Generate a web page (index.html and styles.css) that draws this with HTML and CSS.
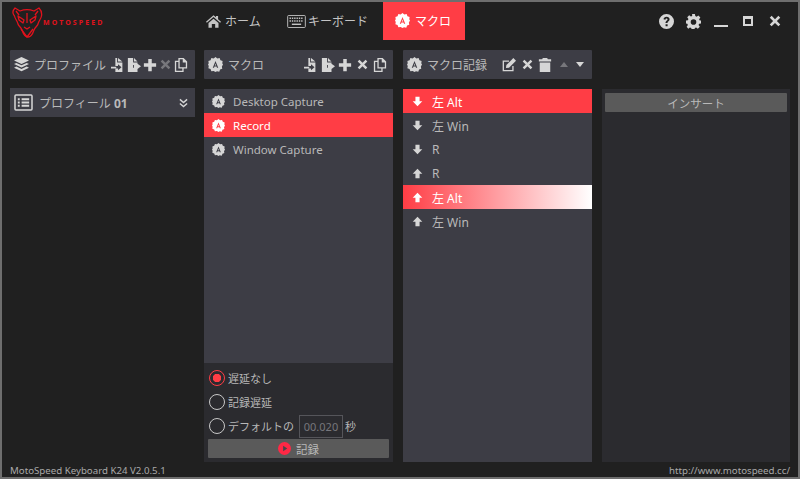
FILE: index.html
```html
<!DOCTYPE html>
<html lang="ja">
<head>
  <meta charset="UTF-8">
  <title>MotoSpeed Keyboard K24</title>
  <link rel="stylesheet" href="styles.css">
</head>
<body>
  <!-- Shared icons -->
  <svg class="defs" width="0" height="0">
    <symbol id="i-badge" viewBox="0 0 16 16">
      <path d="M8 0l2 1.500 2.400-.4.9 2.300 2.300.9-.4 2.400L16 8l-1.200 2 .4 2.400-2.300.9-.9 2.300-2.400-.4L8 16l-2-1.200-2.400.4-.9-2.300-2.300-.9.4-2.400L0 8l.8-1.300-.4-2.400 2.300-.9.9-2.300 2.400.4z"/>
      <path fill="var(--badge-in, #3d3d45)" fill-rule="evenodd" d="M8 4.200l2.900 7.300H9.600l-.5-1.400H6.900l-.5 1.400H5.100zM7.300 9h1.400L8 7z"/>
    </symbol>
    <symbol id="i-import" viewBox="0 0 16 16">
      <path d="M7 0v5h6v11H5v-4h3v2l4-3.500L8 7v2H5V0zM8 0l5 4H8z"/><path d="M0 10h6v2H0z"/>
    </symbol>
    <symbol id="i-export" viewBox="0 0 16 16">
      <path d="M1 0h6v5h5v3H7v3h5v5H1zM8 0l4 4H8zM12 6.500l4 3-4 3V11H8V8h4z"/>
    </symbol>
    <symbol id="i-plus" viewBox="0 0 16 16"><path d="M6 1h4v5h5v4h-5v5H6v-5H1V6h5z"/></symbol>
    <symbol id="i-times" viewBox="0 0 16 16"><path d="M3.500 1L8 5.500 12.500 1 15 3.500 10.500 8l4.500 4.500-2.500 2.500L8 10.500 3.500 15 1 12.500 5.500 8 1 3.500z"/></symbol>
    <symbol id="i-copy" viewBox="0 0 16 16">
      <path fill-rule="evenodd" d="M5 0h6l4 4v8h-4v4H1V3h4zM6.500 1.500V10.500h7V5H10V1.500zM2.500 4.500v10h7v-2.500H5V4.500z"/>
    </symbol>
    <symbol id="i-up" viewBox="0 0 16 16"><path d="M8 1l7 7.500h-4V15H5V8.500H1z"/></symbol>
    <symbol id="i-down" viewBox="0 0 16 16"><path d="M8 15L1 7.500h4V1h6v6.500h4z"/></symbol>
    <symbol id="i-cog" viewBox="0 0 16 16">
      <path fill-rule="evenodd" d="M6.500 0h3l.4 2.200 1.400.6L13.200 1.500l2.100 2.100L14 5.500l.6 1.400 1.400.1v3l-2 .4-.6 1.400 1.300 1.800-2.100 2.100-1.800-1.300-1.400.6-.4 1.900h-3l-.4-2-1.400-.6-1.800 1.300L.7 13.600 2 11.800l-.6-1.400L0 10V7l2-.4.600-1.400L1.300 3.400 3.400 1.300 5.200 2.600l1.400-.6zM8 5.500a3 3 0 100 6 3 3 0 000-6z"/>
    </symbol>
  </svg>

  <div class="window">
    <!-- Title bar -->
    <header class="topbar">
      <div class="logo">
        <svg class="logo-head line" viewBox="0 0 32 32" stroke="#e0121c" stroke-width="1.300" stroke-linejoin="round">
          <path d="M4 1l5 3c4-1.500 10-1.500 14 0l5-3c2 2 3 5 2.500 8-.5 3-3 5-3.500 8-.5 2-3 3-4 6-1 3-3 7-6 7s-5-4-6-7c-1-3-3.500-4-4-6-.5-3-3-5-3.500-8C1 6 2 3 4 1z"/>
          <path d="M7 9l6 4-1 3-4-3zM25 9l-6 4 1 3 4-3zM16 6v10M13 20l3 2 3-2M10 22l6 8 6-8M5 4l3 4M27 4l-3 4"/>
        </svg>
        <span class="logo-text">MOTOSPEED</span>
      </div>
      <nav class="tabs">
        <div class="tab tab-home">
          <svg class="tab-icon" viewBox="0 0 18 16"><path d="M9 1l3 2.600V2h2.500v3.800L18 9l-1 1.100L9 3.200 1 10.100 0 9zM3 10.500L9 5.200l6 5.300V16h-4v-4.500H7V16H3z"/></svg>
          ホーム
        </div>
        <div class="tab tab-keys">
          <svg class="tab-icon key-icon line" viewBox="0 0 20 14" stroke="currentColor"><rect x=".5" y=".5" width="19" height="13" rx="1"/><path stroke-dasharray="1.500 1" stroke-width="1.500" d="M2.500 3.500h15M2.500 6.500h15"/><path stroke-width="1.500" d="M5 10h10"/></svg>
          キーボード
        </div>
        <div class="tab tab-active">
          <svg class="tab-icon badge-white"><use href="#i-badge"/></svg>
          マクロ
        </div>
      </nav>
      <div class="winctl">
        <svg class="ctl" viewBox="0 0 16 16"><path fill-rule="evenodd" d="M8 0a8 8 0 110 16A8 8 0 018 0zM7 11v2h2.200v-2zM8.100 3C6.300 3 5 4 4.800 5.700l2 .3c.1-.8.600-1.200 1.200-1.200.6 0 1.100.4 1.100 1 0 1.200-2.200 1.500-2.200 3.500v.4h2.100c0-1.500 2.300-1.800 2.300-4C11.300 4 9.900 3 8.100 3z"/></svg>
        <svg class="ctl"><use href="#i-cog"/></svg>
        <span class="ctl-min"></span>
        <span class="ctl-max"></span>
        <svg class="ctl ctl-close"><use href="#i-times"/></svg>
      </div>
    </header>

    <!-- Four columns -->
    <main class="panels">
      <section class="col col-profile">
        <div class="head">
          <svg class="head-icon" viewBox="0 0 16 16"><path d="M8 0l8 3.700-8 3.700L0 3.700zM2.500 6.300L8 8.800l5.500-2.500L16 7.500l-8 3.800-8-3.800zM2.500 10.200L8 12.700l5.500-2.500L16 11.500 8 15.300 0 11.500z"/></svg>
          <span class="head-title">プロファイル</span>
          <div class="tools tools-profile">
            <svg class="tool"><use href="#i-import"/></svg>
            <svg class="tool"><use href="#i-export"/></svg>
            <svg class="tool"><use href="#i-plus"/></svg>
            <svg class="tool tool-x tool-off"><use href="#i-times"/></svg>
            <svg class="tool"><use href="#i-copy"/></svg>
          </div>
        </div>
        <div class="profile">
          <svg class="profile-icon line" viewBox="0 0 20 18" stroke="currentColor"><rect x="1" y="1" width="18" height="16" rx="1" stroke-width="1.600"/><path stroke-width="2" d="M4 5.500h2M8 5.500h8M4 9h2M8 9h8M4 12.500h2M8 12.500h8"/></svg>
          <span>プロフィール <b>01</b></span>
          <svg class="chev line" viewBox="0 0 10 10" stroke="currentColor" stroke-width="1.600"><path d="M1 1l4 3.500L9 1M1 5.500L5 9l4-3.500"/></svg>
        </div>
      </section>

      <section class="col">
        <div class="head">
          <svg class="head-icon"><use href="#i-badge"/></svg>
          <span class="head-title">マクロ</span>
          <div class="tools">
            <svg class="tool"><use href="#i-import"/></svg>
            <svg class="tool"><use href="#i-export"/></svg>
            <svg class="tool"><use href="#i-plus"/></svg>
            <svg class="tool tool-x"><use href="#i-times"/></svg>
            <svg class="tool"><use href="#i-copy"/></svg>
          </div>
        </div>
        <div class="macro-box">
          <ul class="list list-macro">
            <li><svg class="row-icon"><use href="#i-badge"/></svg>Desktop Capture</li>
            <li class="on"><svg class="row-icon"><use href="#i-badge"/></svg>Record</li>
            <li><svg class="row-icon"><use href="#i-badge"/></svg>Window Capture</li>
          </ul>
          <div class="options">
            <label class="opt"><span class="radio radio-on"></span>遅延なし</label>
            <label class="opt"><span class="radio"></span>記録遅延</label>
            <label class="opt"><span class="radio"></span>デフォルトの<span class="delay">00.020</span>秒</label>
            <button class="btn btn-record">
              <svg class="rec-dot" viewBox="0 0 14 14"><circle cx="7" cy="7" r="7" fill="#ff2845"/><path fill="#4a4248" d="M5.500 4l4.500 3-4.500 3z"/></svg>
              記録
            </button>
          </div>
        </div>
      </section>

      <section class="col">
        <div class="head">
          <svg class="head-icon"><use href="#i-badge"/></svg>
          <span class="head-title">マクロ記録</span>
          <div class="tools tools-record">
            <svg class="tool line" viewBox="0 0 16 16" stroke="currentColor" stroke-width="1.500"><path d="M12.500 9v5.500H1.500V3.500H8"/><path class="solid" stroke="none" d="M13 0l3 3-8 8-3.500.5L5 8z"/></svg>
            <svg class="tool tool-x"><use href="#i-times"/></svg>
            <svg class="tool" viewBox="0 0 16 16"><path d="M5.500 0h5l.7 1.500H15V4H1V1.500h3.800zM2 5h12v11H2z"/></svg>
            <svg class="caret caret-off" viewBox="0 0 10 6"><path d="M5 0l5 6H0z"/></svg>
            <svg class="caret" viewBox="0 0 10 6"><path d="M5 6L0 0h10z"/></svg>
          </div>
        </div>
        <ul class="list list-keys">
          <li class="on"><svg class="row-icon"><use href="#i-down"/></svg>左 Alt</li>
          <li><svg class="row-icon"><use href="#i-down"/></svg>左 Win</li>
          <li><svg class="row-icon"><use href="#i-down"/></svg>R</li>
          <li><svg class="row-icon"><use href="#i-up"/></svg>R</li>
          <li class="fade"><svg class="row-icon"><use href="#i-up"/></svg>左 Alt</li>
          <li><svg class="row-icon"><use href="#i-up"/></svg>左 Win</li>
        </ul>
      </section>

      <section class="col col-insert">
        <button class="btn btn-insert">インサート</button>
      </section>
    </main>

    <footer class="status">
      <span>MotoSpeed Keyboard K24 V2.0.5.1</span>
      <span>http://www.motospeed.cc/</span>
    </footer>
  </div>
</body>
</html>
```

FILE: styles.css
```css
:root {
  --bg: #202020;
  --panel: #3d3d45;
  --panel-dark: #2b2b2f;
  --red: #ff3d45;
  --text: #b9b9b9;
  --icon: #d6d6d6;
}
* {
  box-sizing: border-box;
}
body {
  margin: 0;
  background: var(--bg);
  font-family: "Noto Sans", "Noto Sans CJK JP", sans-serif;
  color: var(--text);
  font-size: 12px;
}
.defs {
  position: absolute;
}
.window {
  width: 800px;
  height: 479px;
  border: 2px solid #6e6e6e;
  display: flex;
  flex-direction: column;
  overflow: hidden;
}
svg {
  fill: currentColor;
  display: block;
  flex: none;
}
svg.line {
  fill: none;
}
svg.line .solid {
  fill: currentColor;
}
/* Title bar */
.topbar {
  height: 38px;
  display: flex;
  flex: none;
}
.logo {
  width: 197px;
  padding: 5px 0 0 9px;
  display: flex;
}
.logo-head {
  width: 32px;
  height: 32px;
}
.logo-text {
  color: #e0121c;
  font-size: 7px;
  font-weight: 700;
  letter-spacing: 2.1px;
  margin: 11px 0 0 0;
  line-height: 10px;
}
.tabs {
  display: flex;
  height: 38px;
}
.tab {
  display: flex;
  align-items: center;
  font-size: 12px;
  color: #c4c4c4;
}
.tab-home {
  padding-left: 7px;
  width: 88px;
  gap: 4px;
}
.tab-home .tab-icon {
  width: 15px;
  height: 14px;
}
.tab-keys {
  width: 96px;
  gap: 2px;
}
.key-icon {
  width: 19px;
  height: 13px;
}
.tab-active {
  width: 82px;
  margin-top: -1px;
  height: 39px;
  background: var(--red);
  color: #fff;
  padding-left: 12px;
  gap: 5px;
}
.tab-active .tab-icon {
  width: 15px;
  height: 15px;
}
.badge-white {
  --badge-in: #ff3d45;
}
.winctl {
  margin-left: auto;
  display: flex;
  align-items: center;
  color: var(--icon);
  padding-right: 17px;
}
.ctl {
  width: 15px;
  height: 15px;
  margin-left: 12px;
}
.ctl-min {
  width: 14px;
  height: 2px;
  background: var(--icon);
  margin: 10px 0 0 13px;
}
.ctl-max {
  width: 10px;
  height: 10px;
  border: 2px solid var(--icon);
  border-top-width: 3px;
  margin-left: 15px;
}
.ctl-close {
  width: 12px;
  height: 12px;
  margin-left: 16px;
}
/* Columns */
.panels {
  flex: 1;
  min-height: 0;
  padding: 10px 8px 0;
  display: grid;
  grid-template-columns: 184px 189px 189px 188px;
  column-gap: 10px;
}
.col {
  display: flex;
  flex-direction: column;
  min-height: 0;
}
.col-profile {
  margin-right: -1px;
}
.head {
  height: 29px;
  flex: none;
  background: var(--panel);
  display: flex;
  align-items: center;
  padding-left: 4px;
  border-radius: 1px;
}
.head-icon {
  width: 15px;
  height: 15px;
  color: var(--icon);
}
.head-title {
  margin-left: 5px;
  white-space: nowrap;
  font-size: 12px;
}
.tools {
  margin-left: auto;
  display: flex;
  align-items: center;
  gap: 3px;
  color: var(--icon);
  padding-right: 6px;
}
.tools-profile {
  gap: 2px;
  padding-right: 7px;
}
.tool {
  width: 14px;
  height: 14px;
}
.tool-off {
  color: #77777c;
}
.tools .tool-x {
  width: 11px;
  height: 11px;
  margin: 0 2px;
}
.tools-profile .tool-x {
  margin: 0 1px;
}
.tools-record {
  gap: 3.5px;
  padding-right: 8px;
}
.caret {
  width: 8px;
  height: 5px;
  margin-left: 5px;
}
.caret-off {
  color: #77777c;
  margin-left: 4px;
}
.profile {
  margin-top: 9px;
  height: 29px;
  background: var(--panel);
  display: flex;
  align-items: center;
  padding: 0 7px 0 4px;
  gap: 6px;
  font-size: 12px;
}
.profile-icon {
  width: 19px;
  height: 17px;
  color: var(--icon);
}
.profile b {
  font-weight: 700;
}
.chev {
  margin-left: auto;
  width: 9px;
  height: 10px;
  color: var(--icon);
}
/* Lists */
.list {
  list-style: none;
  margin: 0;
  padding: 0;
  background: var(--panel);
  font-size: 12px;
}
.list li {
  height: 24px;
  display: flex;
  align-items: center;
  white-space: nowrap;
}
.list .row-icon {
  color: var(--icon);
}
.list li.on {
  background: var(--red);
  color: #fff;
}
.list li.on .row-icon,
.list li.fade .row-icon {
  color: #fff;
  --badge-in: var(--red);
}
.list li.fade {
  background: linear-gradient(to right, var(--red), #fff);
  color: #fff;
}
.list-macro {
  flex: 1;
  font-size: 11.5px;
}
.list-macro li {
  padding-left: 8px;
  gap: 8px;
}
.list-macro .row-icon {
  width: 13px;
  height: 13px;
}
.list-keys {
  flex: 1;
  margin-top: 10px;
}
.list-keys li {
  padding: 1px 0 0 9px;
  gap: 9px;
}
.list-keys .row-icon {
  width: 11px;
  height: 11px;
}
.macro-box {
  margin-top: 10px;
  flex: 1;
  min-height: 0;
  display: flex;
  flex-direction: column;
  background: var(--panel-dark);
}
/* Delay options */
.options {
  height: 99px;
  flex: none;
  padding: 3px 4px 4px;
}
.opt {
  display: flex;
  align-items: center;
  height: 24px;
  padding-left: 1px;
  gap: 3px;
  font-size: 11px;
  white-space: nowrap;
}
.radio {
  width: 16px;
  height: 16px;
  border: 1.500px solid #c8c8c8;
  border-radius: 50%;
  flex: none;
}
.radio-on {
  border-color: var(--red);
  background: radial-gradient(circle, var(--red) 0 4px, transparent 4.500px);
}
.delay {
  width: 44px;
  height: 23px;
  margin: 0 -1px 0 2px;
  border: 1px solid #55555a;
  color: #77777c;
  text-align: center;
  line-height: 21px;
  font-size: 11px;
}
.btn {
  display: flex;
  align-items: center;
  justify-content: center;
  border: 0;
  background: #5a5a5a;
  color: var(--text);
  font: inherit;
  font-size: 11.5px;
  border-radius: 1px;
  padding: 0;
}
.btn-record {
  width: 181px;
  height: 19px;
  margin-top: 1px;
  gap: 5px;
}
.rec-dot {
  width: 13px;
  height: 13px;
}
.col-insert {
  background: var(--panel-dark);
  margin-top: 39px;
  padding: 4px 3px;
}
.btn-insert {
  height: 19px;
  flex: none;
}
/* Status bar */
.status {
  height: 15px;
  flex: none;
  display: flex;
  justify-content: space-between;
  align-items: flex-end;
  padding: 0 8px;
  font-size: 9.7px;
  line-height: 13px;
  color: #a9a9a9;
}
```
